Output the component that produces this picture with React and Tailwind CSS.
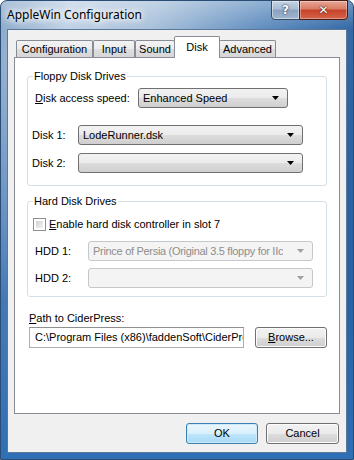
import React from 'react';

const ui = "[font-family:'Liberation_Sans',Arial,sans-serif] text-[11px] leading-[13px] text-black";

const Arrow = ({ disabled }) => (
    <svg width="7" height="4" viewBox="0 0 7 4" className="shrink-0">
        <path d="M0 0h7L3.5 4z" fill={disabled ? '#a0a0a0' : '#000'} />
    </svg>
);

const Combo = ({ value, className, disabled }) => (
    <div
        className={`flex h-[20px] items-center justify-between gap-[6px] rounded-[3px] border pl-[4px] pr-[8px] ${disabled
            ? 'border-[#c5c8cb] bg-[#f4f4f4] text-[#8d8d8d] tracking-[-0.3px]'
            : 'border-[#707070] bg-[linear-gradient(to_bottom,#f2f2f2_0%,#ebebeb_50%,#dddddd_51%,#cfcfcf_100%)]'
            } ${className}`}
    >
        <span className="min-w-0 overflow-hidden whitespace-nowrap">{value}</span>
        <Arrow disabled={disabled} />
    </div>
);

const Button = ({ children, className, primary }) => (
    <div
        className={`flex h-[21px] items-center justify-center rounded-[3px] border ${primary
            ? 'border-[#3c7fb1] bg-[linear-gradient(to_bottom,#eaf6fd_0%,#d9f0fc_50%,#bee6fd_51%,#a7d9f5_100%)] shadow-[inset_0_0_0_1px_#cdeaf9]'
            : 'border-[#707070] bg-[linear-gradient(to_bottom,#f2f2f2_0%,#ebebeb_50%,#dddddd_51%,#cfcfcf_100%)] shadow-[inset_0_0_0_1px_#fcfcfc]'
            } ${className}`}
    >
        {children}
    </div>
);

const tabs = [
    { name: 'Configuration', w: 'w-[77px]' },
    { name: 'Input', w: 'w-[42px]' },
    { name: 'Sound', w: 'w-[40px]' },
    { name: 'Disk', w: 'w-[46px]', active: true },
    { name: 'Advanced', w: 'w-[57px]' },
];

export default function App() {
    return (
        <div className="flex h-[460px] w-[354px] flex-col rounded-t-[7px] border border-[#2a4d75] bg-[linear-gradient(to_bottom,rgba(255,255,255,0.3)_0px,rgba(255,255,255,0)_28px,rgba(40,100,170,0)_60px,rgba(40,100,170,0.8)_300px,#2f6fb5_460px),linear-gradient(100deg,#8aa8c9_0%,#c0d2e6_16%,#a9c1db_36%,#5f8dbf_62%,#2e64a2_85%,#24578f_100%)]">
            {/* Title bar */}
            <div className="flex h-[28px] shrink-0 items-start justify-between pl-[6px] pr-[5px]">
                <span className="pt-[6px] [font-family:'Noto_Sans',sans-serif] text-[12px] leading-[16px] text-black [text-shadow:0_0_6px_#fff,0_0_8px_#fff,0_0_10px_#fff]">
                    AppleWin Configuration
                </span>
                <div className="-mt-px flex h-[20px]">
                    <div className="flex w-[29px] items-center justify-center rounded-bl-[4px] border border-[#3b4c62] bg-[linear-gradient(to_bottom,#c6d3e3_0%,#a9bcd3_45%,#8aa2bf_50%,#9fb6d0_100%)] shadow-[inset_0_0_0_1px_rgba(255,255,255,0.45)]">
                        <span className="[font-family:'DejaVu_Sans',sans-serif] text-[12px] font-bold leading-none text-white [text-shadow:0_0_1px_#243a55,0_0_2px_#243a55]">?</span>
                    </div>
                    <div className="-ml-px flex w-[49px] items-center justify-center rounded-br-[4px] border border-[#4a1c14] bg-[linear-gradient(to_bottom,#e8a797_0%,#d97a63_45%,#c7432a_50%,#d4634a_100%)] shadow-[inset_0_0_0_1px_rgba(255,255,255,0.35)]">
                        <span className="[font-family:'DejaVu_Sans',sans-serif] text-[12px] font-bold leading-none text-white [text-shadow:0_0_1px_#4a1c14,0_0_2px_#4a1c14]">✕</span>
                    </div>
                </div>
            </div>

            {/* Client area */}
            <div className={`mx-[6px] flex h-[424px] flex-col border border-[#5c7899] bg-[#f0f0f0] ${ui}`}>
                {/* Tabs */}
                <div className="flex h-[27px] items-end pl-[8px]">
                    {tabs.map(tab => (
                        <div
                            key={tab.name}
                            className={`flex shrink-0 justify-center border border-b-0 ${tab.w} ${tab.active
                                ? 'relative z-10 -mx-[1px] -mb-px h-[22px] rounded-t-[2px] border-[#898c95] bg-white pt-[4px]'
                                : 'h-[17px] rounded-t-[2px] border-[#898c95] bg-[linear-gradient(to_bottom,#f3f3f3_0%,#ebebeb_50%,#dedede_51%,#d6d6d6_100%)] pt-[2px]'
                                }`}
                        >
                            {tab.name}
                        </div>
                    ))}
                </div>

                {/* Panel */}
                <div className="mx-[6px] h-[357px] border border-[#898c95] bg-white px-[12px]">
                    <fieldset className="mt-[12px] rounded-[3px] border border-[#d5dfe5] pb-[12px]">
                        <legend className="ml-[5px] px-[1px] leading-[13px]">Floppy Disk Drives</legend>
                        <div className="mt-[5px] flex items-center pl-[7px]">
                            <span className="w-[103px]"><u>D</u>isk access speed:</span>
                            <Combo value="Enhanced Speed" className="w-[150px]" />
                        </div>
                        <div className="mt-[17px] flex items-center pl-[4px]">
                            <span className="w-[46px]">Disk 1:</span>
                            <Combo value="LodeRunner.dsk" className="w-[225px]" />
                        </div>
                        <div className="mt-[8px] flex items-center pl-[4px]">
                            <span className="w-[46px]">Disk 2:</span>
                            <Combo value="" className="w-[225px]" />
                        </div>
                    </fieldset>

                    <fieldset className="mt-[9px] rounded-[3px] border border-[#d5dfe5] pb-[8px]">
                        <legend className="ml-[5px] px-[1px] leading-[13px]">Hard Disk Drives</legend>
                        <div className="mt-[10px] flex h-[13px] items-center gap-[3px] pl-[5px]">
                            <div className="h-[13px] w-[13px] border border-[#8e8f8f] bg-white p-[2px]">
                                <div className="h-full w-full bg-[linear-gradient(135deg,#cbcfd5_0%,#f6f6f6_100%)]" />
                            </div>
                            <span><u>E</u>nable hard disk controller in slot 7</span>
                        </div>
                        <div className="mt-[10px] flex items-center pl-[7px]">
                            <span className="w-[53px]">HDD 1:</span>
                            <Combo value="Prince of Persia (Original 3.5 floppy for IIc" className="w-[225px]" disabled />
                        </div>
                        <div className="mt-[7px] flex items-center pl-[7px]">
                            <span className="w-[53px]">HDD 2:</span>
                            <Combo value="" className="w-[225px]" disabled />
                        </div>
                    </fieldset>

                    <div className="mt-[15px] pl-[2px]">
                        <div><u>P</u>ath to CiderPress:</div>
                        <div className="mt-[2px] flex items-center gap-[11px]">
                            <div className="flex h-[21px] w-[215px] items-center overflow-hidden whitespace-nowrap border border-[#abadb3] border-t-[#8e8f8f] bg-white pl-[5px]">
                                C:\Program Files (x86)\faddenSoft\CiderPress
                            </div>
                            <Button className="w-[72px]"><span><u>B</u>rowse...</span></Button>
                        </div>
                    </div>
                </div>

                {/* Dialog buttons */}
                <div className="mt-[9px] flex justify-end gap-[8px] pr-[7px]">
                    <Button primary className="w-[72px]">OK</Button>
                    <Button className="w-[73px]">Cancel</Button>
                </div>
            </div>
        </div>
    );
}
